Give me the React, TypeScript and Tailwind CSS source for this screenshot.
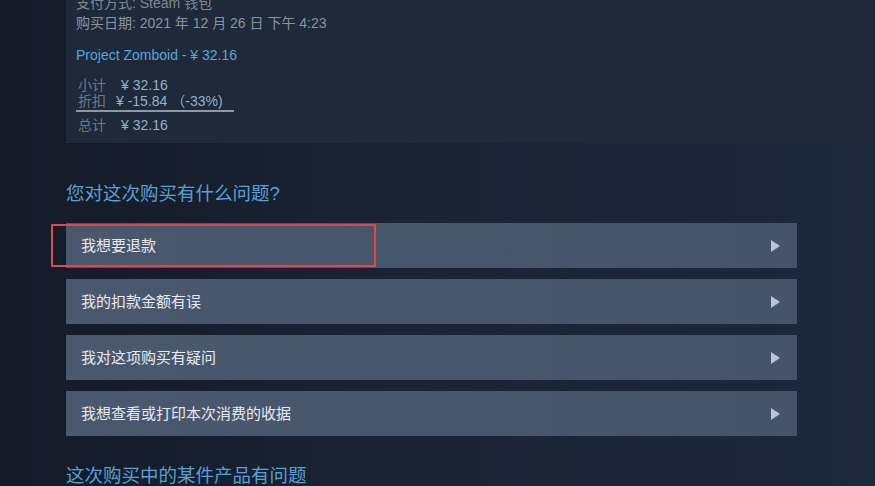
import React from "react";

const font = { fontFamily: '"Liberation Sans", "Noto Sans CJK SC", sans-serif' };

function Row({ label, highlight }: { label: string; highlight?: boolean }) {
  return (
    <div className="relative flex h-[45px] items-center justify-between bg-gradient-to-r from-[#4a586e] to-[#46546a] pl-[15px] pr-[17px]">
      <span className="text-[15px] leading-[20px] text-[#e6eaf0]">{label}</span>
      <svg width="9" height="12" viewBox="0 0 9 12" className="block">
        <path d="M0 0 L9 6 L0 12 Z" fill="#b9c5d6" />
      </svg>
      {highlight && (
        <div className="absolute left-[-15px] top-[1px] h-[43px] w-[325px] border-2 border-[#e0474a]" />
      )}
    </div>
  );
}

export default function App() {
  return (
    <div
      style={font}
      className="h-[486px] w-[875px] overflow-hidden bg-gradient-to-r from-[#131b29] via-[#1a2435] to-[#1c283b]"
    >
      <div className="ml-[66px] h-[143px] overflow-hidden bg-[#1e2939] pl-[10px]">
        <div className="mt-[-7px] flex flex-col">
          <div className="text-[14px] leading-[20px] text-[#7f8993]">支付方式: Steam 钱包</div>
          <div className="text-[14px] leading-[20px] text-[#8a949e]">购买日期: 2021 年 12 月 26 日 下午 4:23</div>
          <div className="mt-[12px] text-[14px] leading-[20px] text-[#5aa6d8]">Project Zomboid - ¥ 32.16</div>
          <div className="mt-[12px] flex flex-col text-[14px] leading-[16px]">
            <div className="flex pl-[2px]">
              <span className="w-[43px] text-[#6f7a86]">小计</span>
              <span className="text-[#93b2cb]">¥ 32.16</span>
            </div>
            <div className="flex w-[158px] border-b-2 border-[#8c9aa8] pb-[1px] pl-[2px]">
              <span className="w-[38px] text-[#6f7a86]">折扣</span>
              <span className="whitespace-nowrap text-[#93b2cb]">¥ -15.84 （-33%)</span>
            </div>
            <div className="mt-[5px] flex pl-[2px]">
              <span className="w-[43px] text-[#6f7a86]">总计</span>
              <span className="text-[#93b2cb]">¥ 32.16</span>
            </div>
          </div>
        </div>
      </div>

      <div className="ml-[66px] w-[731px]">
        <div className="mt-[39px] text-[18.5px] leading-[24px] text-[#5d9fcf]">您对这次购买有什么问题?</div>
        <div className="mt-[17px] flex flex-col gap-[11px]">
          <Row label="我想要退款" highlight />
          <Row label="我的扣款金额有误" />
          <Row label="我对这项购买有疑问" />
          <Row label="我想查看或打印本次消费的收据" />
        </div>
        <div className="mt-[27px] text-[18.5px] leading-[26px] text-[#5d9fcf]">这次购买中的某件产品有问题</div>
      </div>
    </div>
  );
}
